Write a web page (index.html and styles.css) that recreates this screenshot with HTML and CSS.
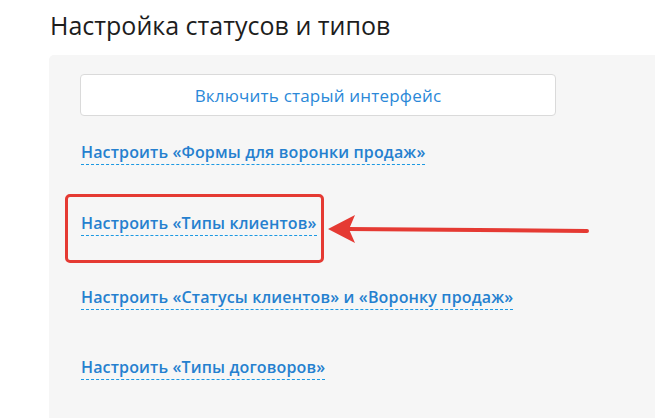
FILE: index.html
```html
<!DOCTYPE html>
<html lang="ru">
<head>
<meta charset="utf-8">
<title>Настройка статусов и типов</title>
<link rel="stylesheet" href="styles.css">
</head>
<body>
<h1 class="title">Настройка статусов и типов</h1>
<div class="panel">
  <button class="old-ui" type="button">Включить старый интерфейс</button>
  <ul class="links">
    <li class="link-row"><a class="dash-link" href="#">Настроить «Формы для воронки продаж»</a></li>
    <li class="link-row"><a class="dash-link" href="#">Настроить «Типы клиентов»</a></li>
    <li class="link-row link-row--wide"><a class="dash-link" href="#">Настроить «Статусы клиентов» и «Воронку продаж»</a></li>
    <li class="link-row"><a class="dash-link" href="#">Настроить «Типы договоров»</a></li>
  </ul>
  <div class="mark-box"></div>
  <svg class="mark-arrow" width="270" height="40" viewBox="0 0 270 40">
    <line x1="20" y1="16" x2="260" y2="18" stroke="#e53a33" stroke-width="4" stroke-linecap="round"/>
    <polygon points="1,16 28,2 22,16.3 28,30" fill="#e53a33"/>
  </svg>
</div>
</body>
</html>
```
FILE: styles.css
```css
html, body {
  margin: 0;
  padding: 0;
  background: #ffffff;
}

body {
  font-family: "Open Sans", "Noto Sans", "Liberation Sans", sans-serif;
  width: 655px;
  height: 418px;
  overflow: hidden;
}

.title {
  margin: 9px 0 14px 50px;
  font-size: 25px;
  line-height: 32px;
  font-weight: 400;
  color: #1d1d1d;
}

.panel {
  position: relative;
  margin-left: 49px;
  height: 363px;
  background: #f6f6f6;
  border-top-left-radius: 5px;
  padding: 19px 0 0 31px;
  box-sizing: border-box;
}

.old-ui {
  display: block;
  width: 476px;
  height: 42px;
  box-sizing: border-box;
  background: #ffffff;
  border: 1px solid #dadada;
  border-radius: 4px;
  font-family: inherit;
  font-size: 17px;
  letter-spacing: 0.2px;
  color: #2a88d8;
  padding: 0;
  cursor: pointer;
}

.links {
  list-style: none;
  margin: 26px 0 0 0;
  padding: 0;
  display: flex;
  flex-direction: column;
  gap: 51px;
}

.link-row {
  height: 20px;
  line-height: 20px;
  padding-left: 1px;
}

.link-row--wide {
  margin-top: 3px;
  margin-bottom: -1px;
}

.dash-link {
  font-size: 16px;
  font-weight: 600;
  letter-spacing: 0.15px;
  color: #2580cf;
  text-decoration: none;
  border-bottom: 1px dashed #1b98e2;
  padding-bottom: 1px;
}

.mark-box {
  position: absolute;
  left: 16px;
  top: 139px;
  width: 259px;
  height: 69px;
  box-sizing: border-box;
  border: 3px solid #e53a33;
  border-radius: 5px;
}

.mark-arrow {
  position: absolute;
  left: 278px;
  top: 158px;
}
```
